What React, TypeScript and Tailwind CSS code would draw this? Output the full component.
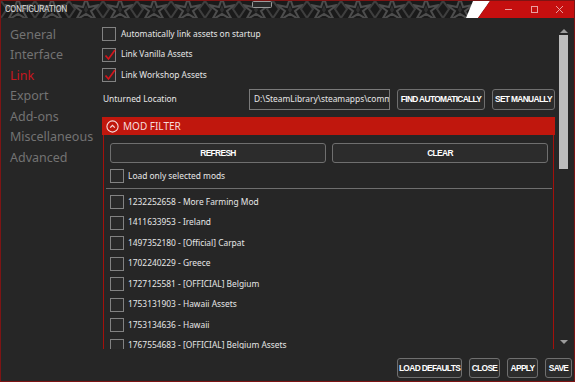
import React from 'react';

const mods = [
  '1232252658 - More Farming Mod',
  '1411633953 - Ireland',
  '1497352180 - [Official] Carpat',
  '1702240229 - Greece',
  '1727125581 - [OFFICIAL] Belgium',
  '1753131903 - Hawaii Assets',
  '1753134636 - Hawaii',
  '1767554683 - [OFFICIAL] Belgium Assets',
];

const navItems = ['General', 'Interface', 'Link', 'Export', 'Add-ons', 'Miscellaneous', 'Advanced'];

const CheckBox = ({ checked }: { checked?: boolean }) => (
  <span className="relative w-[14px] h-[14px] shrink-0 border border-[#828282] bg-[#292929]">
    {checked && (
      <svg className="absolute left-[1px] top-[0px]" width="12" height="12" viewBox="0 0 12 12">
        <path d="M1.5 6.5 L4.5 10 L11 1" stroke="#d3151b" strokeWidth="1.7" fill="none" />
      </svg>
    )}
  </span>
);

const Btn = ({ label, className }: { label: string; className?: string }) => (
  <button
    className={
      "h-[20px] flex items-center justify-center whitespace-nowrap rounded-[3px] border border-[#6f6f6f] bg-[#2c2c2c] text-white font-bold font-['Liberation_Sans',sans-serif] text-[8.4px] tracking-[-0.65px] " +
      (className ?? '')
    }
  >
    {label}
  </button>
);

const TitleBar = () => (
  <div className="relative h-[17px] shrink-0 bg-[#1a1a1a] overflow-hidden">
    <svg className="absolute inset-0" width="573" height="17">
      <defs>
        <pattern id="stars" width="34" height="17" patternUnits="userSpaceOnUse">
          <path d="M17 -3 L20 6 L30 4 L22 10 L27 19 L17 13 L7 19 L12 10 L4 4 L14 6 Z" fill="none" stroke="#4d4d4d" strokeWidth="2" />
          <path d="M0 0 L6 8 L0 17 M34 0 L28 8 L34 17" fill="none" stroke="#3e3e3e" strokeWidth="2" />
          <path d="M17 4 L19 9 L17 12 L15 9 Z" fill="#303030" />
        </pattern>
      </defs>
      <rect width="573" height="17" fill="url(#stars)" />
      <polygon points="472,0 489,0 477,17 465,17" fill="#ffffff" />
      <polygon points="489,0 573,0 573,17 477,17" fill="#c50f0f" />
      <rect x="251.5" y="0.5" width="19" height="6" rx="1" fill="#2a2a2a" stroke="#9a9a9a" strokeWidth="1" />
      <line x1="504" y1="8.5" x2="511" y2="8.5" stroke="#e9a0a0" strokeWidth="1" />
      <rect x="530.5" y="5.5" width="6" height="6" fill="none" stroke="#e9a0a0" strokeWidth="1" />
      <path d="M555 5 L562 12 M562 5 L555 12" stroke="#e9a0a0" strokeWidth="1" />
    </svg>
    <span className="absolute left-[4px] top-[2px] font-['Roboto',sans-serif] text-[8.5px] tracking-[-0.25px] leading-[13px] text-[#dcdcdc]">
      CONFIGURATION
    </span>
  </div>
);

const App: React.FC = () => {
  return (
    <div className="w-[575px] h-[382px] flex flex-col border border-[#7d1414] bg-[#262626] font-['Noto_Sans',sans-serif] overflow-hidden">
      <TitleBar />

      <div className="flex flex-1 min-h-0">
        {/* Side navigation */}
        <nav className="w-[101px] shrink-0 pt-[6.75px] pl-[9px]">
          {navItems.map((item) => (
            <div
              key={item}
              className={
                'h-[20.5px] leading-[20.5px] text-[12.5px] ' + (item === 'Link' ? 'text-[#c8161e]' : 'text-[#737373]')
              }
            >
              {item}
            </div>
          ))}
        </nav>

        {/* Link settings */}
        <div className="w-[453px] shrink-0 pt-[6px] overflow-hidden text-[8.4px] text-[#e6e6e6]">
          <div className="h-[20.5px] flex items-center gap-[5px]">
            <CheckBox />
            <span>Automatically link assets on startup</span>
          </div>
          <div className="h-[20.5px] flex items-center gap-[5px]">
            <CheckBox checked />
            <span>Link Vanilla Assets</span>
          </div>
          <div className="h-[20.5px] flex items-center gap-[5px]">
            <CheckBox checked />
            <span>Link Workshop Assets</span>
          </div>

          <div className="mt-[3.5px] h-[21px] flex items-center">
            <span className="w-[147px] pl-[1px]">Unturned Location</span>
            <div className="w-[141px] h-[21px] border border-[#7a7a7a] bg-[#262626] flex items-center pl-[4px] overflow-hidden whitespace-nowrap">
              D:\SteamLibrary\steamapps\common\Unturned
            </div>
            <Btn label="FIND AUTOMATICALLY" className="ml-[7px] w-[88px] h-[21px]" />
            <Btn label="SET MANUALLY" className="ml-[7px] w-[63px] h-[21px]" />
          </div>

          {/* Mod filter */}
          <div className="mt-[7px] h-[18px] bg-[#c0170d] flex items-center pl-[4px] gap-[4px]">
            <svg width="13" height="13" viewBox="0 0 13 13">
              <circle cx="6.5" cy="6.5" r="5.6" fill="none" stroke="#f6dede" strokeWidth="1.1" />
              <path d="M4.2 7.6 L6.5 5.3 L8.8 7.6" fill="none" stroke="#f6dede" strokeWidth="1.3" />
            </svg>
            <span className="text-[10px] text-[#f7dcdc]">MOD FILTER</span>
          </div>
          <div className="mx-[1px] border-x border-[#a3110c] h-[400px]">
            <div className="grid grid-cols-2 gap-[6px] pl-[6px] pr-[5px] pt-[8px]">
              <Btn label="REFRESH" />
              <Btn label="CLEAR" />
            </div>
            <div className="mt-[3px] h-[20.5px] flex items-center gap-[4px] pl-[6px]">
              <CheckBox />
              <span>Load only selected mods</span>
            </div>
            <div className="mt-[1.5px] ml-[2px] mr-[1px] h-px bg-[#6e6e6e]" />
            <div className="mt-[3px]">
              {mods.map((mod) => (
                <div key={mod} className="h-[20.5px] flex items-center gap-[4px] pl-[6px]">
                  <CheckBox />
                  <span>{mod}</span>
                </div>
              ))}
            </div>
          </div>
        </div>

        {/* Scrollbar */}
        <div className="ml-[3px] w-[11px] flex flex-col items-center pt-[11px] pb-[5px]">
          <svg width="8" height="4" viewBox="0 0 8 4">
            <path d="M0 4 L4 0 L8 4 Z" fill="#9c9c9c" />
          </svg>
          <div className="mt-[2px] w-[9px] h-[134px] bg-[#bdbdbd]" />
          <div className="flex-1" />
          <svg width="8" height="4" viewBox="0 0 8 4">
            <path d="M0 0 L8 0 L4 4 Z" fill="#9c9c9c" />
          </svg>
        </div>
      </div>

      {/* Footer */}
      <div className="h-[32px] shrink-0 flex justify-end items-start gap-[7px] pt-[9px] pr-[2px]">
        <Btn label="LOAD DEFAULTS" className="w-[65px]" />
        <Btn label="CLOSE" className="w-[31px]" />
        <Btn label="APPLY" className="w-[31px]" />
        <Btn label="SAVE" className="w-[27px]" />
      </div>
    </div>
  );
};

export default App;
